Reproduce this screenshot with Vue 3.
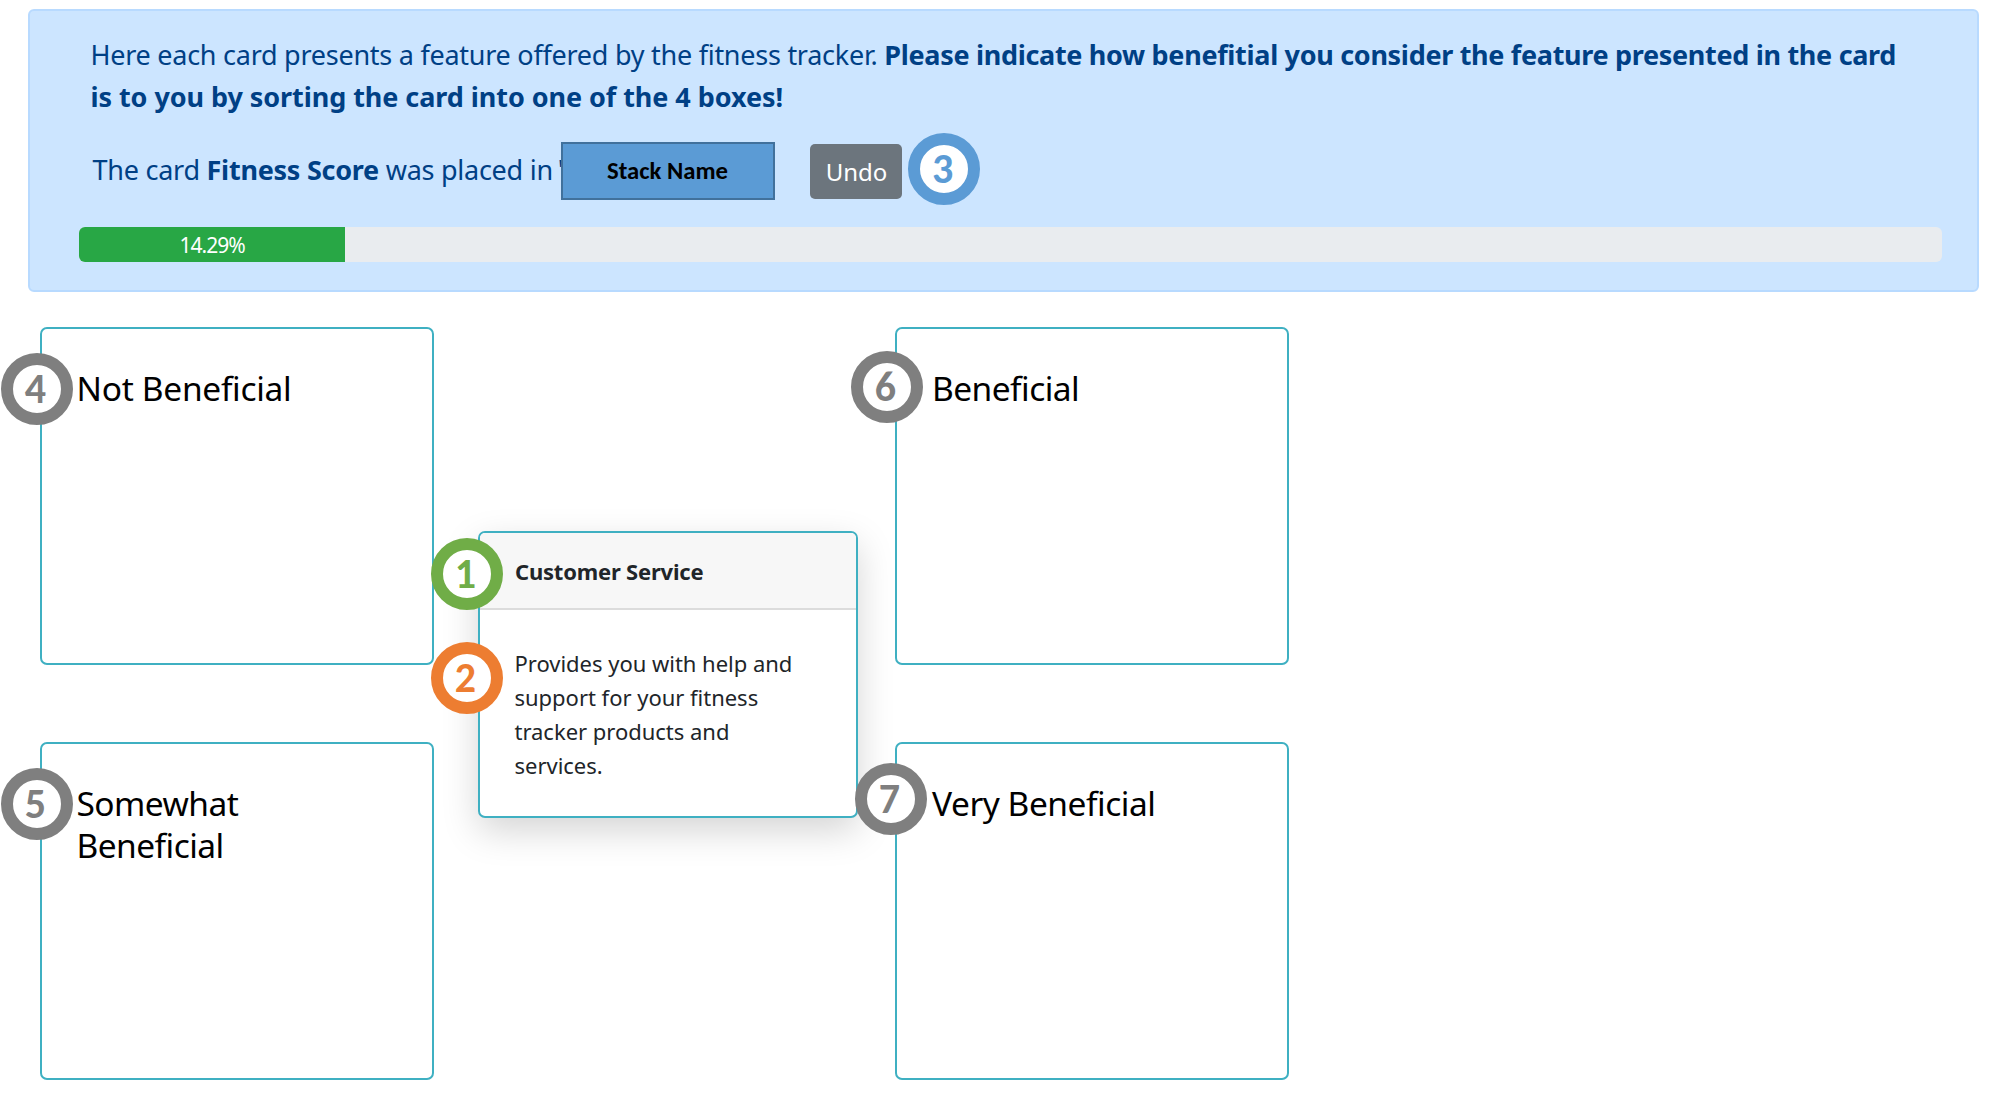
<script setup>
const progress = 14.29

const stacks = [
  { id: 4, lines: ['Not Beneficial'], tone: 'plain' },
  { id: 6, lines: ['Beneficial'], tone: 'tight shifted' },
  { id: 5, lines: ['Somewhat', 'Beneficial'], tone: 'tight' },
  { id: 7, lines: ['Very Beneficial'], tone: 'snug shifted' },
]

const description = [
  'Provides you with help and',
  'support for your fitness',
  'tracker products and',
  'services.',
]
</script>

<template>
  <main class="page">
    <section class="panel">
      <p class="intro">
        <span class="intro-line">
          <span class="lead">Here each card presents a feature offered by the fitness tracker. </span>
          <strong class="ask">Please indicate how benefitial you consider the feature presented in the card</strong>
        </span>
        <strong class="intro-line ask-end">is to you by sorting the card into one of the 4 boxes!</strong>
      </p>

      <div class="status">
        <p class="placed">
          <span class="placed-a">The card </span><strong>Fitness Score</strong><span class="placed-b"> was placed in</span><span class="quote"> '</span>
        </p>
        <span class="stack-name">Stack Name</span>
        <button class="undo" type="button">Undo</button>
        <span class="badge badge-3">3</span>
      </div>

      <div class="progress">
        <div class="progress-bar" :style="{ width: progress + '%' }">{{ progress }}%</div>
      </div>
    </section>

    <section class="board">
      <div v-for="s in stacks" :key="s.id" class="stack">
        <h2 class="stack-label" :class="s.tone">
          <span v-for="line in s.lines" :key="line" class="line">{{ line }}</span>
        </h2>
        <span class="badge" :class="'badge-' + s.id">{{ s.id }}</span>
      </div>

      <article class="card">
        <header class="card-header">Customer Service</header>
        <p class="card-body">
          <span v-for="line in description" :key="line" class="line">{{ line }}</span>
        </p>
        <span class="badge badge-1">1</span>
        <span class="badge badge-2">2</span>
      </article>
    </section>
  </main>
</template>

<style>
body {
  background: #fff;
}
</style>

<style scoped>
* {
  box-sizing: border-box;
}

.page {
  width: 1995px;
  height: 1096px;
  padding-top: 9px;
  overflow: hidden;
  font-family: "Noto Sans", "Open Sans", sans-serif;
  color: #212529;
}

.line {
  display: block;
}

.panel {
  height: 283px;
  margin: 0 16px 0 28px;
  padding: 23px 35px 0 49px;
  background: #cce5ff;
  border: 2px solid #b8daff;
  border-radius: 6px;
  color: #004085;
}

.intro {
  margin: 0 0 0 11.5px;
  font-size: 27px;
  line-height: 42px;
  white-space: nowrap;
}

.intro-line {
  display: block;
}

.lead {
  letter-spacing: -0.257px;
}

.ask {
  letter-spacing: -0.311px;
}

.ask-end {
  letter-spacing: -0.062px;
}

.status {
  display: flex;
  align-items: center;
  position: relative;
  height: 58px;
  margin: 24px 0 27px;
}

.placed {
  width: 482px;
  margin: 0;
  padding: 0 0 2px 13.5px;
  font-size: 27px;
  line-height: 42px;
  letter-spacing: -0.26px;
  white-space: pre;
}

.placed-a {
  letter-spacing: -0.25px;
}

.placed-b {
  letter-spacing: -0.26px;
}

.quote {
  letter-spacing: -2px;
}

.stack-name {
  display: flex;
  align-items: center;
  justify-content: center;
  position: relative;
  width: 214px;
  height: 58px;
  margin-right: 35px;
  padding-right: 1px;
  background: #5b9bd5;
  border: 2px solid #41719c;
  color: #000;
  font: bold 24.7px/58px Carlito, Calibri, Lato, sans-serif;
}

.undo {
  width: 92px;
  height: 55px;
  margin: 0;
  padding: 1px 0 0 1px;
  background: #6c757d;
  border: 0;
  border-radius: 5px;
  color: #fff;
  font: 24px/36px "Noto Sans", sans-serif;
}

.progress {
  display: flex;
  height: 35px;
  background: #e9ecef;
  border-radius: 6px;
  overflow: hidden;
}

.progress-bar {
  background: #28a745;
  color: #fff;
  font-size: 21px;
  line-height: 37px;
  letter-spacing: -1px;
  text-align: center;
}

.board {
  position: relative;
  display: grid;
  grid-template-columns: 394px 394px;
  grid-auto-rows: 338px;
  column-gap: 460.5px;
  row-gap: 77px;
  padding: 35px 0 0 40px;
}

.stack {
  position: relative;
  padding: 38px 34.5px;
  background: #fff;
  border: 2px solid #3fb0c2;
  border-radius: 7px;
}

.stack-label {
  margin: 0;
  color: #000;
  font-size: 33.5px;
  font-weight: 400;
  line-height: 42.4px;
  letter-spacing: -0.3px;
  white-space: nowrap;
}

.stack-label.tight {
  letter-spacing: -0.54px;
}

.stack-label.snug {
  letter-spacing: -0.47px;
}

.stack-label.shifted {
  padding-left: 1px;
}

.card {
  position: absolute;
  left: 478px;
  top: 239px;
  width: 380px;
  height: 287px;
  background: #fff;
  border: 2px solid #3fb0c2;
  border-radius: 7px;
  box-shadow: 0 13px 36px rgba(0, 0, 0, 0.17);
}

.card-header {
  height: 77px;
  padding-left: 35px;
  background: #f7f7f7;
  border-bottom: 2px solid #dcdcdc;
  border-radius: 5px 5px 0 0;
  font-size: 22px;
  font-weight: 700;
  line-height: 77px;
  letter-spacing: -0.2px;
}

.card-body {
  margin: 0;
  padding: 36px 34px 0 34.5px;
  font-size: 22px;
  line-height: 34px;
  letter-spacing: -0.02px;
  white-space: nowrap;
}

.badge {
  position: absolute;
  display: flex;
  align-items: center;
  justify-content: center;
  width: 72px;
  height: 72px;
  padding: 0 2px 1px 0;
  background: #fff;
  border: 12px solid #7f7f7f;
  border-radius: 50%;
  color: #7f7f7f;
  font: bold 42px/48px Carlito, Calibri, Lato, sans-serif;
}

.badge-1 {
  left: -49.5px;
  top: 5px;
  border-color: #70ad47;
  color: #70ad47;
}

.badge-2 {
  left: -49.5px;
  top: 109px;
  border-color: #ed7d31;
  color: #ed7d31;
}

.badge-3 {
  left: 828.6px;
  top: -9px;
  border-color: #5b9bd5;
  color: #5b9bd5;
}

.badge-4 {
  left: -41.5px;
  top: 24px;
}

.badge-5 {
  left: -41.5px;
  top: 24px;
}

.badge-6 {
  left: -46px;
  top: 22px;
}

.badge-7 {
  left: -42px;
  top: 19px;
  z-index: 1;
}

.badge-1,
.badge-2,
.badge-3,
.badge-4,
.badge-5,
.badge-6,
.badge-7 {
  padding-bottom: 0;
}
</style>
